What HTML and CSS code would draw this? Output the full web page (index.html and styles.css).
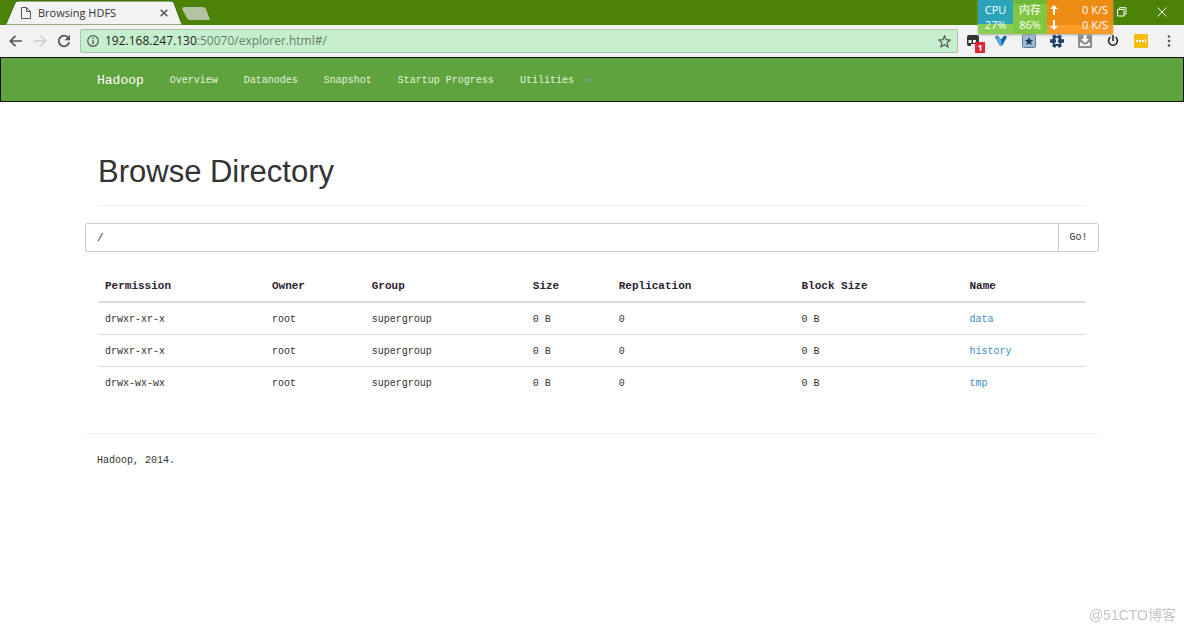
FILE: index.html
```html
<!DOCTYPE html>
<html lang="en">
<head>
<meta charset="utf-8">
<title>Browsing HDFS</title>
<link rel="stylesheet" href="styles.css">
</head>
<body>
<header class="browser">
  <div class="tabstrip">
    <svg class="tab-shape" width="220" height="25" viewBox="0 0 220 25" aria-hidden="true">
      <path d="M3 25 L6 24 L15 3 Q16 1 19 1 H170 Q173 1 174 3 L181 22 Q182 25 185 25 Z" fill="#f2f2f2" stroke="#39690a" stroke-width="1"/>
      <path d="M184 7 H203 Q205 7 206 9 L210 20 H190 Q188 20 187 18 L182 9 Q182 7 184 7 Z" fill="#b3c2a3"/>
    </svg>
    <div class="tab">
      <svg width="10" height="12" viewBox="0 0 10 12" fill="none" stroke="#555"><path d="M.5.5h5l4 4v7h-9zM5.500.5v4h4"/></svg>
      <span class="tab-title">Browsing HDFS</span>
      <button class="plain" aria-label="Close tab"><svg width="8" height="8" viewBox="0 0 8 8" stroke="#555" stroke-width="1.5"><path d="M.7.7l6.600 6.600M7.300.7L.7 7.300"/></svg></button>
    </div>
    <div class="window-buttons">
      <button class="plain" aria-label="Restore"><svg width="10" height="10" viewBox="0 0 10 10" fill="none" stroke="#fff"><path d="M.5 2.500h6.500v6.500H.5zM2.500 2.500V.7h6.500v6.300H7"/></svg></button>
      <button class="plain" aria-label="Close window"><svg width="10" height="10" viewBox="0 0 10 10" stroke="#fff"><path d="M.5.5l9 9M9.500.5l-9 9"/></svg></button>
    </div>
  </div>
  <div class="toolbar">
    <div class="nav-buttons">
      <button class="plain" aria-label="Back"><svg width="14" height="12" viewBox="0 0 14 12" fill="none" stroke="#555" stroke-width="1.700"><path d="M13 6H1.500M6.500.8L1.300 6l5.200 5.200"/></svg></button>
      <button class="plain" aria-label="Forward"><svg width="14" height="12" viewBox="0 0 14 12" fill="none" stroke="#ccc" stroke-width="1.500"><path d="M1 6h11.500M7.500.8L12.700 6l-5.200 5.200"/></svg></button>
      <button class="plain" aria-label="Reload"><svg width="14" height="14" viewBox="0 0 14 14"><path d="M11.300 3.800A5.300 5.300 0 1 0 12.200 8.200" fill="none" stroke="#555" stroke-width="1.800"/><path d="M13 .8v5.400H7.600z" fill="#555"/></svg></button>
    </div>
    <div class="address">
      <svg width="12" height="12" viewBox="0 0 12 12"><circle cx="6" cy="6" r="5.300" fill="none" stroke="#555" stroke-width="1.200"/><path d="M5.300 2.700h1.400v1.400H5.300zM5.300 5.200h1.400v4H5.300z" fill="#555"/></svg>
      <span class="url"><span class="host">192.168.247.130</span>:50070/explorer.html#/</span>
      <button class="plain" aria-label="Bookmark"><svg width="13" height="13" viewBox="0 0 13 13" fill="none" stroke="#555" stroke-width="1.200"><path d="M6.500 1l1.600 3.700 4 .4-3 2.700.9 4-3.500-2.100L3 11.800l.9-4-3-2.700 4-.4z"/></svg></button>
    </div>
    <div class="extensions">
      <button class="plain ext" aria-label="Extension, 1 item"><svg width="14" height="14" viewBox="0 0 14 14"><path d="M3 1h8q2 0 2 2v9H9V10H5v2H3q-2 0-2-2V3q0-2 2-2z" fill="#333"/><path d="M2.500 6h3v3h-3zM7 6h3v3H7z" fill="#eee"/></svg><span class="badge">1</span></button>
      <button class="plain ext" aria-label="V extension"><svg width="14" height="14" viewBox="0 0 14 14"><path d="M1 3q2-2 4-.5L7 5l2-2.500Q11 1 13 3L8.500 11Q7 13 5.500 11z" fill="#1d5fb0"/><path d="M2 3q1.500-1 3 .5L7.500 7v5q-1.500 0-2-1z" fill="#4fb3ea"/><path d="M4 1h6L7 5.500z" fill="#fff"/></svg></button>
      <button class="plain ext" aria-label="Favorites"><svg width="14" height="14" viewBox="0 0 14 14"><rect x=".5" y=".5" width="13" height="13" rx="1" fill="#9bbdd4" stroke="#5a7d97"/><path d="M7 3l1.200 2.800 3 .2L9 8l.7 3L7 9.400 4.300 11 5 8 2.800 6l3-.2z" fill="#203c55"/></svg></button>
      <button class="plain ext" aria-label="Settings extension"><svg width="14" height="14" viewBox="0 0 14 14"><circle cx="7" cy="7" r="5" fill="#233f66"/><path d="M3.500 1l7 12M10.500 1l-7 12M0 7h14" stroke="#233f66" stroke-width="3.500"/><circle cx="7" cy="5" r="1.600" fill="#dce8f5"/><path d="M6 6h2v2l2 2H4l2-2z" fill="#dce8f5"/></svg></button>
      <button class="plain ext" aria-label="Downloads"><svg width="14" height="14" viewBox="0 0 14 14"><rect width="14" height="14" rx="1" fill="#8b8b8b"/><path d="M5.500 1h3v4H11L7 9 3 5h2.500z" fill="#fff"/><path d="M2 8.500v3.500h10V8.500H10.500L8.500 10.500h-3L3.500 8.500z" fill="#fff"/></svg></button>
      <button class="plain ext" aria-label="Power"><svg width="14" height="14" viewBox="0 0 14 14" fill="none" stroke="#222" stroke-width="1.600"><path d="M4.500 3.200a4.400 4.400 0 1 0 5 0M7 1v6"/></svg></button>
      <button class="plain ext" aria-label="Notes"><svg width="14" height="14" viewBox="0 0 14 14"><rect width="14" height="14" rx="1" fill="#f5bd0d"/><path d="M2 6h2v2H2zM5 6h2v2H5zM8 6h2v2H8zM11 5h1v4h-1z" fill="#fff"/></svg></button>
      <button class="plain ext" aria-label="Menu"><svg width="14" height="14" viewBox="0 0 14 14" fill="#555"><circle cx="7" cy="2.500" r="1.300"/><circle cx="7" cy="7" r="1.300"/><circle cx="7" cy="11.500" r="1.300"/></svg></button>
    </div>
  </div>
  <div class="monitor">
    <div class="meter cpu"><span>CPU</span><span>27%</span></div>
    <div class="meter mem"><span>内存</span><span>86%</span></div>
    <div class="meter net">
      <div><svg width="8" height="10" viewBox="0 0 8 10" fill="#fff"><path d="M4 0l4 4H5v6H3V4H0z"/></svg><span>0 K/S</span></div>
      <div><svg width="8" height="10" viewBox="0 0 8 10" fill="#fff"><path d="M4 10l4-4H5V0H3v6H0z"/></svg><span>0 K/S</span></div>
    </div>
  </div>
</header>
<nav class="navbar">
  <div class="container nav-inner">
    <a class="brand" href="#">Hadoop</a>
    <a href="#">Overview</a>
    <a href="#">Datanodes</a>
    <a href="#">Snapshot</a>
    <a href="#">Startup Progress</a>
    <a href="#">Utilities<span class="caret"></span></a>
  </div>
</nav>
<main class="container">
  <div class="inset">
    <h1>Browse Directory</h1>
  </div>
  <form class="path-form">
    <input type="text" value="/" aria-label="Directory path">
    <button type="button">Go!</button>
  </form>
  <div class="inset">
    <table>
      <colgroup><col class="c-perm"><col class="c-owner"><col class="c-group"><col class="c-size"><col class="c-repl"><col class="c-block"><col></colgroup>
      <thead><tr><th>Permission</th><th>Owner</th><th>Group</th><th>Size</th><th>Replication</th><th>Block Size</th><th>Name</th></tr></thead>
      <tbody>
        <tr><td>drwxr-xr-x</td><td>root</td><td>supergroup</td><td>0 B</td><td>0</td><td>0 B</td><td><a href="#">data</a></td></tr>
        <tr><td>drwxr-xr-x</td><td>root</td><td>supergroup</td><td>0 B</td><td>0</td><td>0 B</td><td><a href="#">history</a></td></tr>
        <tr><td>drwx-wx-wx</td><td>root</td><td>supergroup</td><td>0 B</td><td>0</td><td>0 B</td><td><a href="#">tmp</a></td></tr>
      </tbody>
    </table>
  </div>
  <footer>Hadoop, 2014.</footer>
</main>
<div class="watermark">@51CTO博客</div>
</body>
</html>
```
FILE: styles.css
```css
* { box-sizing: border-box; }
body {
  margin: 0;
  min-height: 100vh;
  background: #fff;
  color: #333;
  font: 10px/16px "Liberation Mono", monospace;
}
a { color: #428bca; text-decoration: none; }
svg { display: block; flex: none; }
.plain { padding: 0; border: 0; background: none; display: block; }

.browser { position: relative; font-family: "Open Sans", "Noto Sans CJK SC", sans-serif; }
.tabstrip {
  position: relative;
  display: flex;
  justify-content: space-between;
  height: 25px;
  background: #4a8305;
}
.tab-shape { position: absolute; left: 0; top: 0; }
.tab {
  position: relative;
  display: flex;
  align-items: center;
  gap: 7px;
  width: 168px;
  padding-left: 21px;
  font-size: 11px;
  color: #333;
}
.tab-title { flex: 1; white-space: nowrap; }
.window-buttons { display: flex; align-items: center; gap: 30px; padding: 0 17px 2px 0; }
.toolbar {
  display: flex;
  align-items: center;
  height: 32px;
  background: #f2f2f2;
  padding-right: 8px;
}
.nav-buttons { display: flex; align-items: center; gap: 10px; padding: 0 9px; }
.address {
  flex: 1;
  display: flex;
  align-items: center;
  gap: 6px;
  height: 24px;
  padding: 0 6px;
  border: 1px solid #b2bfb4;
  border-radius: 2px;
  background: #c6efce;
}
.url { flex: 1; font-size: 12px; color: #67806b; }
.host { color: #222; }
.extensions { display: flex; gap: 14px; padding-left: 8px; }
.ext { position: relative; }
.badge {
  position: absolute;
  left: 9px;
  top: 8px;
  width: 10px;
  height: 11px;
  background: #e02430;
  color: #fff;
  font: bold 9px/11px "Open Sans", sans-serif;
}
.monitor {
  position: absolute;
  top: 0;
  right: 71px;
  display: flex;
  height: 34px;
  color: #fff;
  font-size: 11px;
  line-height: 15px;
  box-shadow: 0 1px 2px #aaa;
}
.meter { display: flex; flex-direction: column; text-align: center; padding-top: 2px; }
.cpu { width: 35px; background: linear-gradient(#2ba3b8 0 24px, #88cd55 24px); }
.mem { width: 34px; background: linear-gradient(#6db936 0 4px, #82c743 4px); }
.net { width: 66px; background: linear-gradient(#ed8c13 0 25px, #ff9b28 25px); padding-left: 3px; padding-right: 5px; }
.net div { display: flex; align-items: center; justify-content: space-between; }

.container { max-width: 1014px; margin: 0 auto; }
.navbar { background: #5fa33e; border: 1px solid #111; }
.nav-inner { display: flex; align-items: center; gap: 26px; height: 43px; padding: 2px 12px 0; }
.nav-inner a { display: flex; align-items: center; color: #e4f2dc; white-space: nowrap; }
.nav-inner .brand { font-size: 13px; color: #fff; }
.caret {
  margin-left: 12px;
  border: 3px solid transparent;
  border-top-color: #999;
  border-bottom: 0;
}
.inset { padding: 0 13px; }
h1 {
  margin: 52px 0 17px;
  padding-bottom: 15px;
  border-bottom: 1px solid #eee;
  font: 31px/36px "Liberation Sans", Arial, sans-serif;
}
.path-form { display: flex; height: 29px; margin-bottom: 18px; }
.path-form input, .path-form button {
  border: 1px solid #ccc;
  background: #fff;
  color: #333;
  font: inherit;
}
.path-form input { flex: 1; min-width: 0; padding: 0 11px; border-radius: 3px 0 0 3px; border-right: 0; font-size: 11px; }
.path-form button { width: 41px; padding: 0; border-radius: 0 3px 3px 0; }
table { width: 100%; table-layout: fixed; border-collapse: collapse; }
th, td { padding: 9px 7px 6px; text-align: left; }
th { padding: 8px 7px 7px; font-size: 11px; border-bottom: 2px solid #ddd; color: #2b2230; }
td { border-top: 1px solid #ddd; }
.c-perm { width: 16.9%; }
.c-owner { width: 10.1%; }
.c-group { width: 16.3%; }
.c-size { width: 8.7%; }
.c-repl { width: 18.5%; }
.c-block { width: 17%; }
footer { margin-top: 35px; padding: 19px 12px; border-top: 1px solid #eee; }
.watermark {
  position: fixed;
  right: 8px;
  bottom: 6px;
  color: #c4c4c4;
  font: 14px/20px "Liberation Sans", "Noto Sans CJK SC", sans-serif;
}
```
